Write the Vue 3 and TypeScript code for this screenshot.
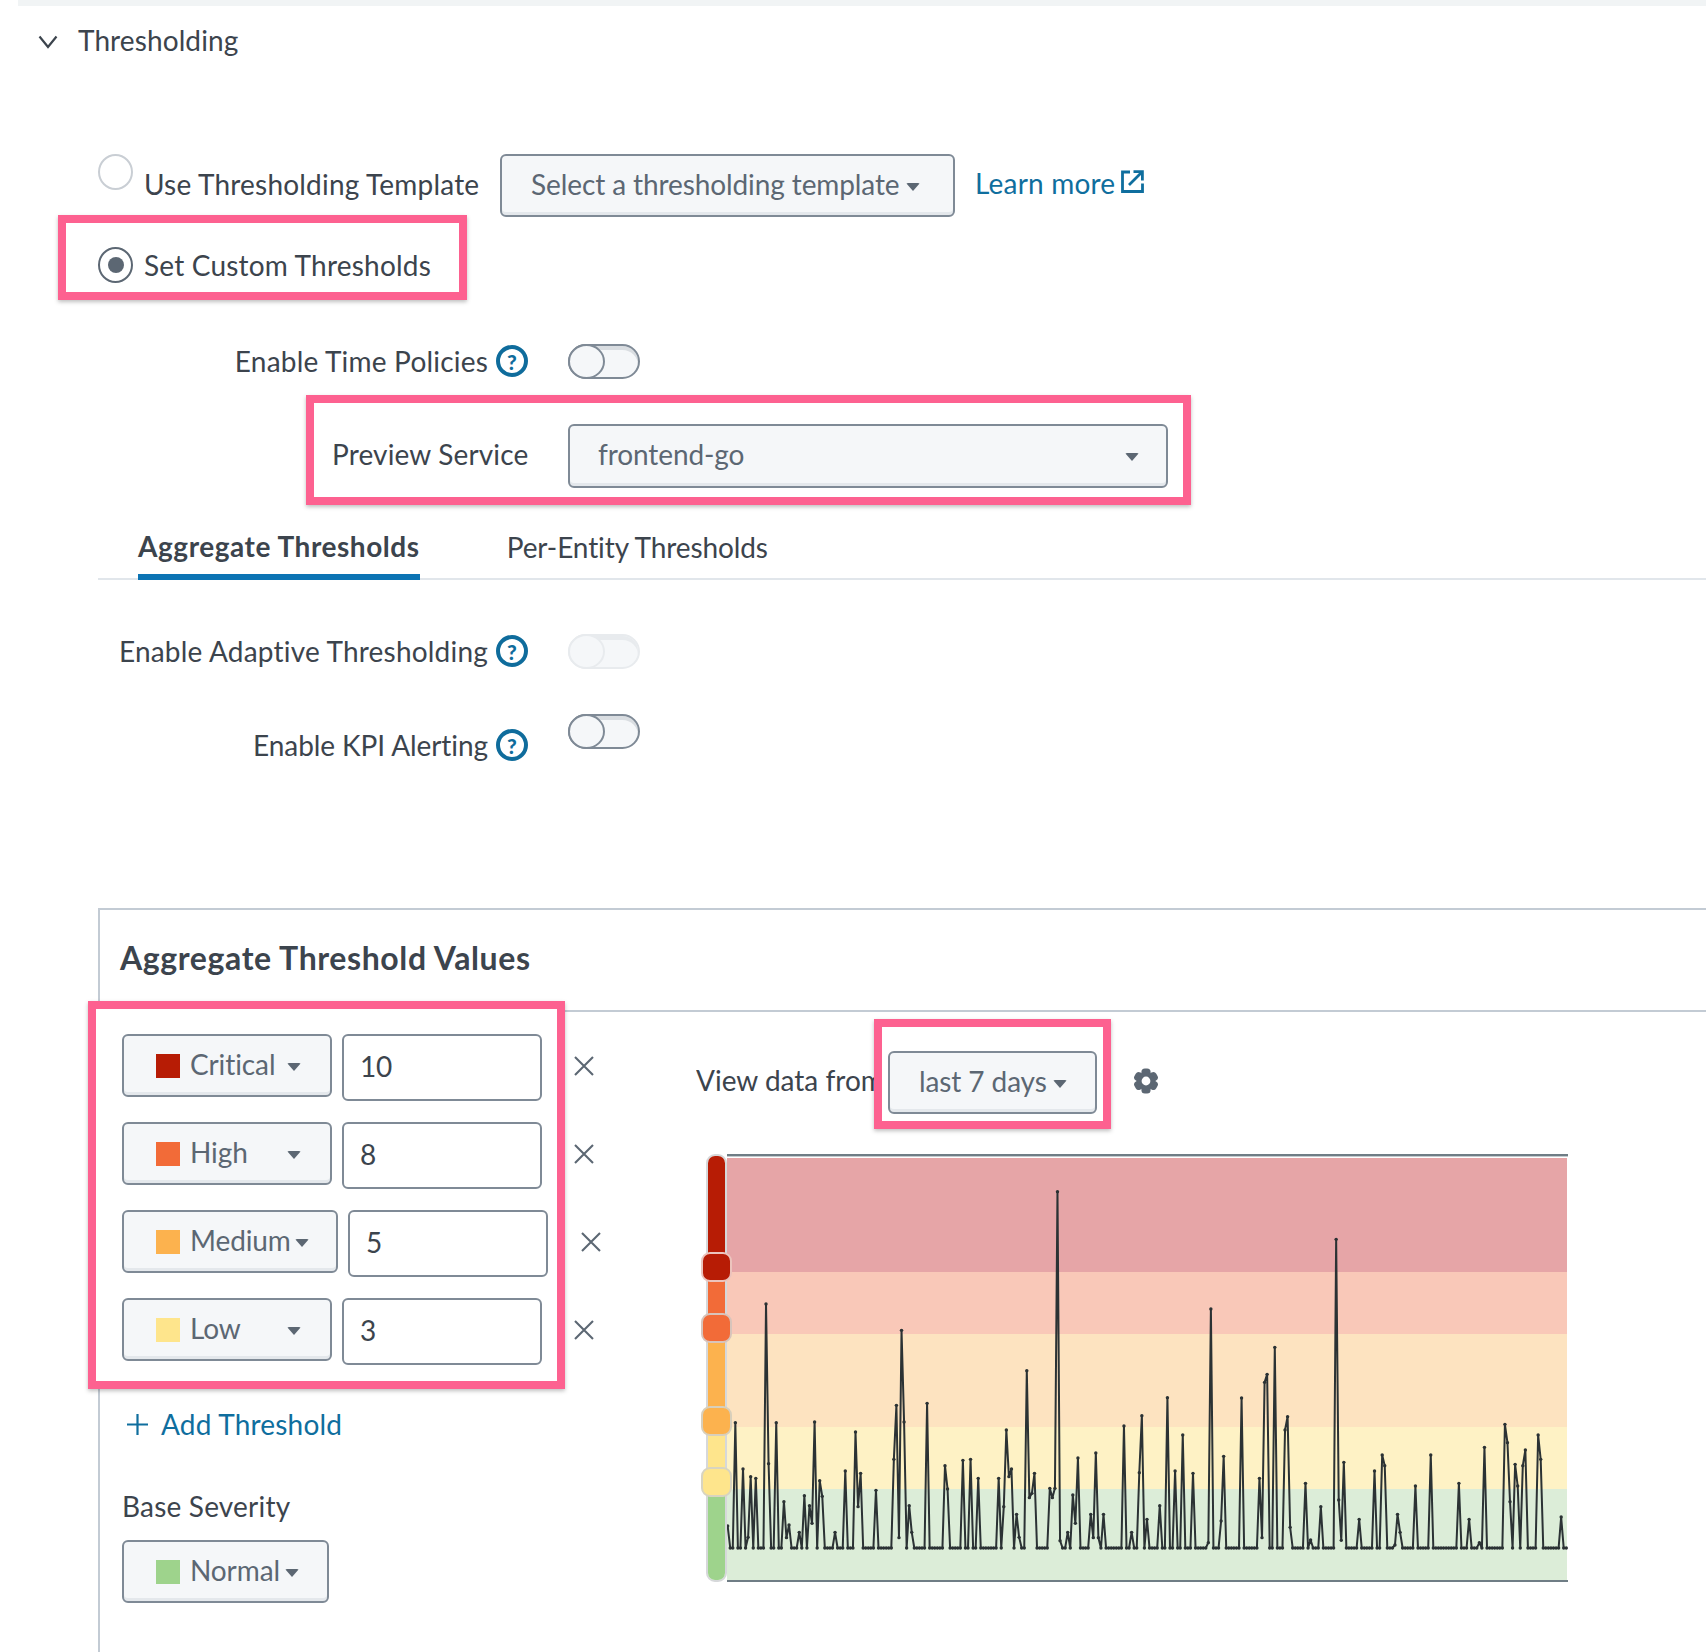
<script setup lang="ts">
import { computed } from 'vue'

interface Row { label: string; color: string; value: string; wide?: boolean }

const rows: Row[] = [
  { label: 'Critical', color: '#b71c05', value: '10' },
  { label: 'High', color: '#f26b38', value: '8' },
  { label: 'Medium', color: '#fcb24e', value: '5', wide: true },
  { label: 'Low', color: '#fee58c', value: '3' },
]

const ORIGIN_X = 727
const ORIGIN_Y = 1154
const STEP = 2.5567
const START = 727.67
const BASE = 1548

const leftSpikes: [number, number][] = [
  [113,1158],[134,848],[157,987],[172,1192],[180,1010],[195,1015],[226,492],[234,971],[257,848],[280,1085],[288,1193],[295,1155],[326,1177],[341,1067],[357,1097],[364,1150],[372,846],[387,1022],[395,1069],[433,1177],[464,993],[494,876],[502,1100],[510,1000],[556,1051],[610,958],[618,796],[625,1193],[633,571],[641,846],[656,1097],[664,1177],[710,790],[764,977],[771,1047],[817,961],[840,958],[863,1015],[925,1015],[940,1100],[948,870],[955,1010],[963,987],[979,1123],[987,1192],[1009,692],[1017,1073],[1025,1060],[1032,1000],[1078,1045],[1086,1073],[1094,1045],[1101,155],[1109,1202],[1132,1177],[1147,1065],[1155,1150],[1163,954],[1201,1123],[1209,1193],[1216,939],[1224,1193],[1239,1123],[1301,858],[1324,1177],[1347,998],[1355,827],[1370,1138],[1408,1097],[1432,773],[1455,993],[1478,885],
]
const rightSpikes: [number, number][] = [
  [38,1000],[84,1208],[92,507],[123,1143],[130,949],[184,774],[238,1015],[245,1193],[253,727],[261,703],[284,622],[315,870],[322,830],[330,1162],[376,1030],[391,1200],[422,1100],[468,298],[476,1080],[483,1201],[491,967],[537,1138],[583,993],[606,945],[614,977],[645,1215],[652,1123],[660,1177],[706,1038],[752,945],[837,1030],[867,1138],[898,1208],[913,922],[975,853],[983,908],[990,1085],[1006,973],[1014,1038],[1029,977],[1037,930],[1075,885],[1083,958],[1144,1131],
]

const points = computed(() => {
  const ys: number[] = new Array(329).fill(BASE)
  const put = (px: number, py: number) => {
    const i = Math.round((px - START) / STEP)
    if (i >= 0 && i < ys.length) ys[i] = py
  }
  leftSpikes.forEach(([x, y]) => put(690 + x / 3, 1140 + y / 3))
  rightSpikes.forEach(([x, y]) => put(1180 + x / 3, 1140 + y / 3))
  return ys.map((y, i) => ({
    x: +(START + i * STEP - ORIGIN_X).toFixed(2),
    y: +(y - ORIGIN_Y).toFixed(2),
  }))
})
const linePath = computed(() =>
  points.value.map((p, i) => `${i ? 'L' : 'M'}${p.x} ${p.y}`).join(''),
)

const bands = [
  { y: 4, h: 114, c: '#e6a5a7' },
  { y: 118, h: 62, c: '#f9c8b8' },
  { y: 180, h: 93, c: '#fde3c0' },
  { y: 273, h: 62, c: '#fef2c5' },
  { y: 335, h: 91, c: '#dcedd8' },
]
const segments = [
  { h: 98, c: '#b71c05' },
  { h: 61, c: '#f26b38' },
  { h: 93, c: '#fcb24e' },
  { h: 61, c: '#fee58c' },
  { h: 111, c: '#9ed38c' },
]
const handles = [
  { top: 98, c: '#b71c05', b: '#ecc4bd' },
  { top: 159, c: '#f26b38', b: '#d8c4bb' },
  { top: 252, c: '#fcb24e', b: '#d8cfbb' },
  { top: 313, c: '#fee58c', b: '#d8d4c0' },
]
const teeth = [0, 60, 120]
</script>

<template>
  <div class="page">
    <div class="topbar"></div>
    <div class="head">
      <svg class="chev" width="20" height="14" viewBox="0 0 20 14"><path d="M1.5 1.5 10 12 18.5 1.5" fill="none" stroke="#3c444d" stroke-width="2.2"/></svg>
      <span class="txt head-label">Thresholding</span>
    </div>

    <div class="template-row">
      <span class="radio off"></span>
      <span class="txt radio-label">Use Thresholding Template</span>
      <button class="btn tpl"><span>Select a thresholding template</span><i class="caret"></i></button>
      <a class="link">Learn more</a>
      <svg class="ext" width="23" height="23" viewBox="0 0 23 23" fill="none" stroke="#0f6e9e" stroke-width="2.8"><path d="M9 2H1.5V21.5H21.5V13.5"/><path d="M8 15 20 3M12.5 1.6H21.4V10.5"/></svg>
    </div>

    <div class="callout custom">
      <span class="radio on"><b></b></span>
      <span class="txt radio-label">Set Custom Thresholds</span>
    </div>

    <div class="form-row time">
      <div class="lab"><span class="txt">Enable Time Policies</span><span class="help">?</span></div>
      <span class="toggle"><i></i></span>
    </div>

    <div class="callout preview">
      <span class="txt pv-label">Preview Service</span>
      <button class="btn pv-select"><span>frontend-go</span><i class="caret"></i></button>
    </div>

    <div class="tabs">
      <span class="tab active">Aggregate Thresholds</span>
      <span class="tab">Per-Entity Thresholds</span>
    </div>

    <div class="form-row adaptive">
      <div class="lab"><span class="txt">Enable Adaptive Thresholding</span><span class="help">?</span></div>
      <span class="toggle disabled"><i></i></span>
    </div>
    <div class="form-row kpi">
      <div class="lab low"><span class="txt">Enable KPI Alerting</span><span class="help">?</span></div>
      <span class="toggle"><i></i></span>
    </div>

    <section class="panel">
      <h2 class="panel-title">Aggregate Threshold Values</h2>
      <div class="panel-body">
        <div class="left">
          <div class="rows-wrap">
            <div class="callout rows">
              <div v-for="r in rows" :key="r.label" class="row">
                <button class="btn sev" :class="{ wide: r.wide }">
                  <span class="swatch" :style="{ background: r.color }"></span>
                  <span class="sev-label">{{ r.label }}</span>
                  <i class="caret"></i>
                </button>
                <div class="input">{{ r.value }}</div>
              </div>
            </div>
            <div class="xs">
              <div v-for="r in rows" :key="r.label" class="x" :class="{ wide: r.wide }">
                <svg width="22" height="22" viewBox="0 0 22 22"><path d="M2 2 20 20M20 2 2 20" stroke="#5c6773" stroke-width="2.1"/></svg>
              </div>
            </div>
          </div>
          <div class="add">
            <svg width="23" height="23" viewBox="0 0 23 23"><path d="M11.5 1V22M1 11.5H22" stroke="#0f6e9e" stroke-width="2.2"/></svg>
            <span class="link">Add Threshold</span>
          </div>
          <div class="txt base-label">Base Severity</div>
          <button class="btn sev normal">
            <span class="swatch" style="background:#9ed38c"></span>
            <span class="sev-label">Normal</span>
            <i class="caret"></i>
          </button>
        </div>

        <div class="right">
          <div class="view-row">
            <span class="txt view-label">View data from</span>
            <div class="callout range">
              <button class="btn range-btn"><span>last 7 days</span><i class="caret"></i></button>
            </div>
            <svg class="gear" width="26" height="26" viewBox="0 0 26 26">
              <rect v-for="t in teeth" :key="t" x="8.4" y="0.5" width="9.2" height="25" rx="3.5" fill="#5c6773" :transform="`rotate(${t} 13 13)`"/>
              <circle cx="13" cy="13" r="8.5" fill="#5c6773"/>
              <circle cx="13" cy="13" r="4.4" fill="#fff"/>
            </svg>
          </div>
          <div class="chart">
            <div class="slider">
              <div class="track">
                <div v-for="s in segments" :key="s.c" :style="{ height: s.h + 'px', background: s.c }"></div>
              </div>
              <span v-for="h in handles" :key="h.c" class="handle" :style="{ top: h.top + 'px', background: h.c, borderColor: h.b }"></span>
            </div>
            <svg class="plot" width="841" height="428" viewBox="0 0 841 428">
              <rect x="0" y="0" width="841" height="2.4" fill="#6f7d85"/>
              <rect v-for="b in bands" :key="b.c" x="0" :y="b.y" width="840" :height="b.h" :fill="b.c"/>
              <rect x="0" y="426" width="841" height="2.2" fill="#6f7d85"/>
              <path :d="linePath" fill="none" stroke="#2b3234" stroke-width="2" stroke-linejoin="round"/>
              <circle v-for="(p, i) in points" :key="i" :cx="p.x" :cy="p.y" r="1.7" fill="#2b3234"/>
            </svg>
          </div>
        </div>
      </div>
    </section>
  </div>
</template>

<style scoped>
.page {
  width: 1706px;
  height: 1652px;
  overflow: hidden;
  background: #fff;
  color: #3c444d;
  font-family: Lato, "Open Sans", sans-serif;
  font-size: 28px;
  letter-spacing: 0.2px;
}
.topbar { height: 6px; margin-left: 18px; background: #f1f4f5; }
.txt { white-space: nowrap; line-height: 32px; }
.head { display: flex; align-items: center; height: 71px; padding-left: 38px; gap: 21px; }
.head-label { margin: 0 0 4px -1px; letter-spacing: 0.1px; }
.template-row { display: flex; align-items: flex-start; height: 63px; margin: 77px 0 0 98px; }
.radio { flex: none; width: 35px; height: 36px; border-radius: 50%; background: #fff; box-sizing: border-box; }
.radio.off { border: 2px solid #c9ced4; }
.radio.on { border: 2px solid #5c6773; display: flex; align-items: center; justify-content: center; }
.radio.on b { width: 16px; height: 16px; border-radius: 50%; background: #5c6773; }
.radio-label { margin-left: 11px; }
.template-row .radio-label { margin-top: 14px; width: 335px; }
.btn {
  display: flex; align-items: center; box-sizing: border-box; height: 63px;
  border: 2px solid #7f8a96; border-radius: 6px; background: #f5f7f9;
  box-shadow: inset 0 -3px 0 #e4e8ec; color: #5c6773;
  font: inherit; letter-spacing: -0.1px; padding: 0; white-space: nowrap; text-align: left;
}
.btn > span:not(.swatch) { margin-bottom: 4px; }
.caret {
  display: inline-block; flex: none; width: 0; height: 0;
  border-left: 7px solid transparent; border-right: 7px solid transparent; border-top: 8px solid #5c6773;
  border-radius: 2px; margin-top: 2px;
}
.tpl { width: 455px; margin-left: 21px; padding-left: 29px; flex: none; }
.tpl .caret { margin-left: 6px; }
.link { color: #0f6e9e; white-space: nowrap; line-height: 32px; }
.template-row .link { margin: 13px 0 0 20px; }
.ext { margin: 16px 0 0 6px; }
.callout { box-sizing: border-box; border: 8px solid #fd6190; background: #fff; box-shadow: 0 2px 4px rgba(0,0,0,.25); position: relative; z-index: 1; }
.custom { display: flex; align-items: center; width: 409px; height: 85px; margin: -2px 0 0 58px; padding: 14px 0 0 32px; }
.form-row { display: flex; align-items: flex-start; margin-left: 98px; height: 35px; }
.time { margin-top: 44px; }
.adaptive { margin-top: 54px; }
.kpi { margin-top: 45px; }
.lab { display: flex; align-items: center; justify-content: flex-end; width: 430px; height: 32px; margin-top: 1px; gap: 8px; }
.lab.low { margin-top: 15px; }
.lab.low .txt { letter-spacing: -0.08px; }
.help {
  display: flex; align-items: center; justify-content: center; box-sizing: border-box; flex: none;
  width: 32px; height: 32px; border: 4px solid #0f6c9c; border-radius: 50%;
  color: #0f6c9c; font-size: 21px; font-weight: 900; line-height: 1; letter-spacing: 0;
}
.toggle {
  display: block; box-sizing: border-box; width: 72px; height: 35px; margin-left: 40px;
  border: 2px solid #7f8a96; border-radius: 18px; background: #f5f7f9;
  box-shadow: inset 0 4px 0 #d9dde1;
}
.toggle i {
  display: block; box-sizing: border-box; width: 37px; height: 35px; margin: -2px 0 0 -2px;
  border: 2px solid #7f8a96; border-radius: 50%; background: #f5f7f9;
}
.toggle.disabled { border-color: #e8ebee; background: #f5f7f9; box-shadow: inset 0 4px 0 #e8ebee; }
.toggle.disabled i { border-color: #e8ebee; }
.preview { display: flex; align-items: center; width: 885px; height: 110px; margin: 16px 0 0 306px; padding: 12px 0 0 18px; }
.pv-label { width: 236px; flex: none; margin-bottom: 4px; letter-spacing: 0.15px; }
.pv-select { width: 600px; height: 64px; padding: 0 27px 0 28px; justify-content: space-between; flex: none; }
.tabs { display: flex; gap: 87px; box-sizing: border-box; height: 75px; margin-left: 98px; padding-left: 40px; border-bottom: 2px solid #e1e6eb; align-items: flex-end; }
.tab { line-height: 32px; padding-bottom: 15px; white-space: nowrap; letter-spacing: -0.1px; }
.tab.active { font-weight: 700; letter-spacing: 0.55px; border-bottom: 6px solid #0c74b4; margin-bottom: -2px; padding-bottom: 12px; }
.panel { margin: 159px 0 0 98px; height: 800px; border-left: 2px solid #c3cbd4; border-top: 2px solid #c3cbd4; }
.panel-title { box-sizing: content-box; margin: 0; height: 100px; padding-left: 20px; border-bottom: 2px solid #c3cbd4; font-size: 32px; font-weight: 700; letter-spacing: 0.6px; line-height: 96px; white-space: nowrap; }
.panel-body { display: flex; align-items: flex-start; padding-top: 1px; }
.left { width: 608px; margin: -12px 0 0 -12px; flex: none; }
.rows-wrap { display: flex; align-items: flex-start; }
.rows { width: 477px; height: 388px; padding: 25px 0 0 26px; flex: none; }
.row { display: flex; align-items: flex-start; gap: 10px; height: 67px; margin-bottom: 21px; }
.sev { width: 210px; padding-left: 32px; flex: none; }
.sev.wide { width: 216px; }
.swatch { flex: none; width: 24px; height: 24px; margin-right: 10px; }
.sev-label { width: 97px; flex: none; }
.sev.wide .sev-label { width: 105px; }
.input { box-sizing: border-box; width: 200px; height: 67px; padding-left: 16px; border: 2px solid #7f8a96; border-radius: 6px; background: #fff; line-height: 60px; letter-spacing: -0.3px; }
.xs { padding-top: 21px; }
.x { display: flex; align-items: center; height: 88px; margin-left: 8px; }
.x.wide { margin-left: 15px; }
.add { display: flex; align-items: center; gap: 12px; margin: 19px 0 0 38px; }
.base-label { margin: 50px 0 0 34px; }
.normal { width: 207px; margin: 18px 0 0 34px; }
.normal .sev-label { width: 95px; }
.right { margin-top: 6px; flex: none; }
.view-row { display: flex; align-items: center; height: 110px; }
.view-label { width: 178px; overflow: hidden; margin-top: 11px; flex: none; letter-spacing: 0; }
.range { width: 237px; height: 110px; padding: 24px 0 0 6px; flex: none; }
.range-btn { width: 209px; padding-left: 29px; }
.range-btn .caret { margin-left: 6px; }
.gear { margin: 14px 0 0 22px; flex: none; }
.chart { display: flex; align-items: flex-start; margin: 25px 0 0 10px; }
.slider { position: relative; width: 21px; height: 428px; flex: none; }
.track { box-sizing: border-box; height: 428px; border: 2px solid #d6d8da; border-radius: 9px; overflow: hidden; }
.handle { position: absolute; left: -5px; box-sizing: border-box; width: 31px; height: 30px; border: 2px solid; border-radius: 9px; }
.plot { display: block; flex: none; }
</style>
